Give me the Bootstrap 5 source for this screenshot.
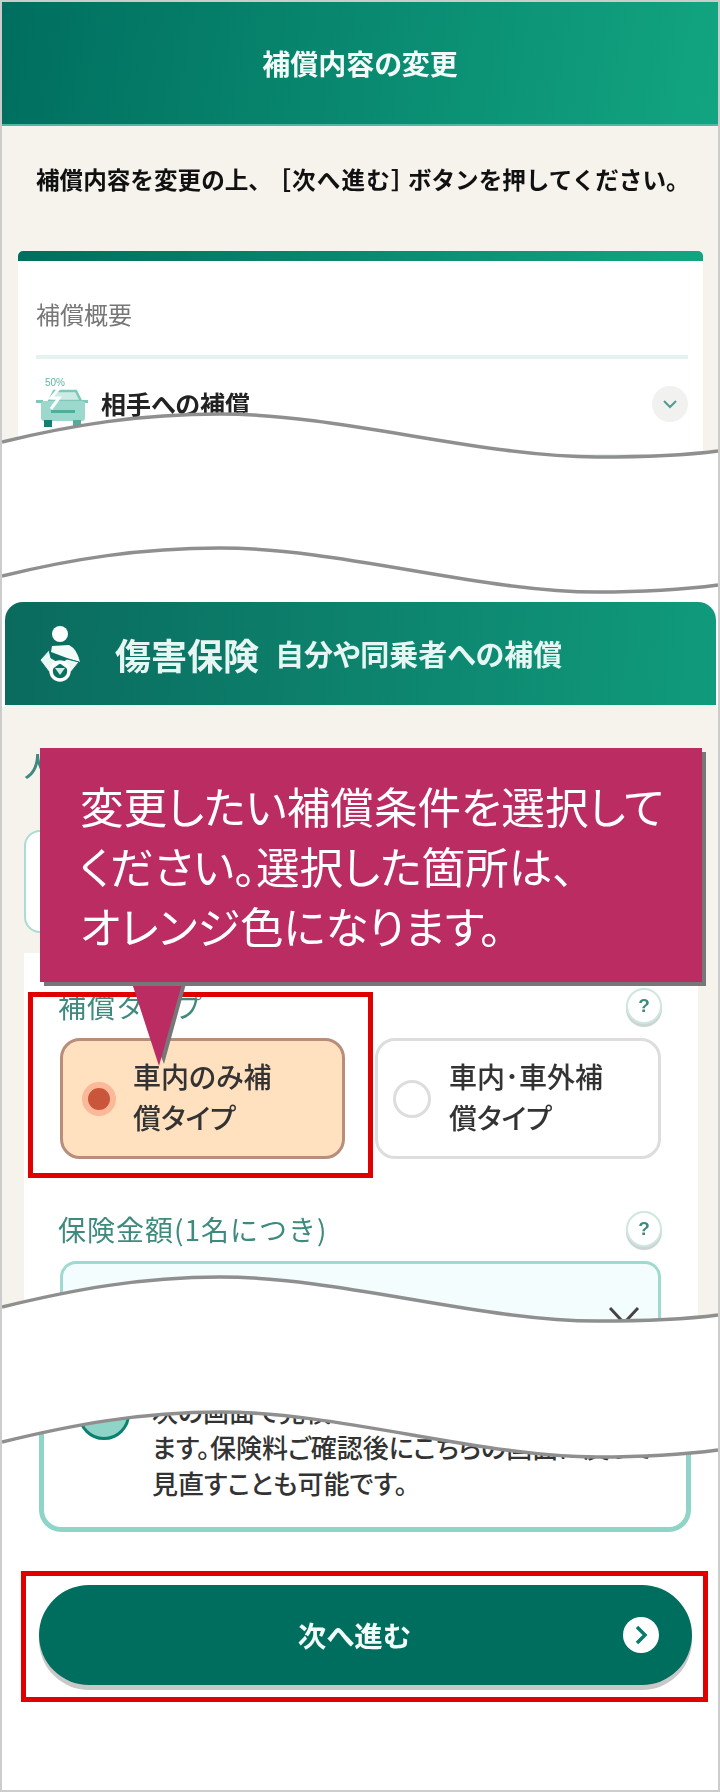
<!DOCTYPE html>
<html lang="ja">
<head>
<meta charset="utf-8">
<title>補償内容の変更</title>
<link href="https://cdn.jsdelivr.net/npm/bootstrap@5.3.0/dist/css/bootstrap.min.css" rel="stylesheet">
<style>
html,body{margin:0;background:#fff;font-family:"Noto Sans CJK JP","Liberation Sans",sans-serif;color:#222}
.frame{position:relative;width:720px;height:1792px;border:2px solid #ccc;overflow:hidden;background:#fff}
.soft{filter:blur(.7px);font-feature-settings:"palt"}
.top-head{height:124px;background:linear-gradient(100deg,#006e5f,#12a581);border-bottom:2px solid #4fb8a0;color:#f2fbf8;font-size:28px;font-weight:700}
.sec-a{height:414px;background:#f6f2ec;padding:38px 15px 0 16px}
.intro{font-size:23.6px;line-height:30px;font-weight:700;margin:0 0 57px 18px;white-space:nowrap;color:#111;font-feature-settings:normal}
.brk{margin:0 -8px 0 7px;letter-spacing:1.2px}
.sum-card{background:#fff;height:319px;padding:0 15px 0 18px}
.sum-bar{height:10px;margin:0 -15px 0 -18px;border-radius:5px 5px 0 0;background:linear-gradient(90deg,#006e5f,#12a581)}
.sum-label{font-size:24px;line-height:34px;color:#777;margin-top:36px}
.sum-line{height:4px;background:#e4f3f1;margin-top:24px}
.sum-row{height:52px;margin-top:19px}
.sum-name{font-size:25px;font-weight:700;margin-left:12px;color:#222}
.chev-dot{width:36px;height:36px;border-radius:50%;background:#f1f1f0}
.sec-b-head{height:105px;margin:62px 2px 0 3px;padding-left:32px;border-radius:18px 18px 0 0;background:linear-gradient(95deg,#0a6a5e,#109b7c);border-bottom:2px solid #e9f7f3;color:#e6f6f2}
.hd-big{font-size:36px;font-weight:700;margin-left:32px;line-height:1}
.hd-sub{font-size:29px;font-weight:700;margin-left:16px;line-height:1}
.sec-b-body{height:677px;background:#f6f2ec;padding:43px 20px 0 22px}
.sec-b-title{font-size:28px;line-height:30px;color:#3f8a7f;font-weight:500}
.plan-box{height:103px;margin-top:50px;background:#fff;border:2px solid #a9dcd2;border-radius:16px}
.opt-panel{background:#fff;height:400px;margin-top:20px;padding:35px 37px 0 36px}
.f-label{font-size:28px;line-height:36px;color:#3f8a7f;margin-left:-2px;letter-spacing:1px;font-feature-settings:normal}
.q-btn{width:36px;height:36px;border-radius:50%;background:#fff;border:2px solid #cfe6e1;box-shadow:0 3px 0 #c9d6d3;color:#3f8a7f;font:700 19px/32px "Liberation Sans",sans-serif;text-align:center;margin-right:-1px}
.opt-grid{display:grid;grid-template-columns:285px 286px;gap:0 30px;margin-top:14px}
.opt-tile{height:121px;border-radius:20px;border:3px solid #ddd;background:#fff;color:#333;padding:0 10px 0 15px;font-weight:500}
.opt-tile.on{background:#ffe0bf;border-color:#b98d7b;padding-left:19px}
.opt-word{font-size:28px;line-height:41px;width:160px;margin:-4px 0 0 18px}
.on .opt-word{margin-left:17px;width:155px}
.r-off{flex:none;width:38px;height:38px;border-radius:50%;border:3px solid #ddd;background:#fff}
.r-on{flex:none;width:34px;height:34px;border-radius:50%;background:#c9563a;border:6px solid #fbb999}
.sel-box{height:110px;margin-top:14px;background:#f4fdfd;border:3px solid #9fd9cf;border-radius:16px;padding-right:18px}
.note-box{height:152px;margin:-4px 27px 0 37px;border:5px solid #8fd5c7;border-radius:22px;background:#fff;padding:8px 10px 0 34px;position:relative}
.note-circle{flex:none;width:52px;height:52px;border-radius:50%;background:#8fd5c7;border:3px solid #0e8070;margin:-5px 0 0 0}
.note-text{font-size:26px;line-height:36px;color:#333;margin-left:22px;white-space:nowrap;font-weight:500}
.go-btn{position:relative;height:100px;margin:53px 26px 0 37px;padding-right:22px;border-radius:50px;background:#006e5f;box-shadow:0 5px 0 #c8c8c8;color:#f2fbf8;font-size:28.5px;font-weight:700}
.go-ico{position:absolute;right:33px;top:32px;width:36px;height:36px}
.mark-box{position:absolute;border:5px solid #e00000}
.mb-a{left:26px;top:990px;width:345px;height:186px}
.mb-b{left:19px;top:1569px;width:687px;height:131px}
.tip{position:absolute;left:38px;top:746px;width:662px;height:234px;background:#bb2c62;box-shadow:4px 4px 0 #777;color:#fff;font-size:43.6px;line-height:60px;padding:27px 0 0 40px;white-space:nowrap;font-feature-settings:"palt"}
.tip-tail{position:absolute;left:126px;top:978px;width:62px;height:86px}
.waves{position:absolute;left:-2px;top:-2px;width:720px;height:1792px;pointer-events:none}
</style>
</head>
<body>
<div class="frame">
  <div class="soft">
    <header class="top-head d-flex align-items-center justify-content-center">補償内容の変更</header>
    <section class="sec-a">
      <p class="intro">補償内容を変更の上、<span class="brk">［次へ進む］</span>ボタンを押してください。</p>
      <div class="sum-card">
        <div class="sum-bar"></div>
        <div class="sum-label">補償概要</div>
        <div class="sum-line"></div>
        <div class="sum-row d-flex align-items-center">
          <svg width="53" height="52" viewBox="7 8 53 52" aria-hidden="true">
            <text x="16" y="16" font-size="10" fill="#5fb5a5" font-family="Liberation Sans">50%</text>
            <path d="M20 31 25 21H47L52 31Z" fill="#cdeae4" stroke="#7cc9ba" stroke-width="2.5"/>
            <path d="M7 30h7v3H7zM52 30h7v3h-7z" fill="#7cc9ba"/>
            <rect x="12" y="31" width="44" height="20" rx="3" fill="#9dd8cc"/>
            <rect x="22" y="40" width="24" height="3" fill="#4fae9c"/>
            <rect x="15" y="50" width="8" height="7" fill="#14806f"/>
            <rect x="44" y="50" width="8" height="7" fill="#4fae9c"/>
            <path d="M32 16 22 28h8l-8 11" fill="none" stroke="#fff" stroke-width="3"/>
          </svg>
          <span class="sum-name flex-grow-1">相手への補償</span>
          <span class="chev-dot d-flex align-items-center justify-content-center">
            <svg width="16" height="12" viewBox="0 0 16 12" aria-hidden="true"><path d="M2 3l6 6 6-6" fill="none" stroke="#4f9d90" stroke-width="2"/></svg>
          </span>
        </div>
        <div class="sum-line"></div>
      </div>
    </section>
    <section class="sec-b-head d-flex align-items-center">
      <svg width="46" height="56" viewBox="8 10 46 56" aria-hidden="true">
        <circle cx="31" cy="18" r="8" fill="#fff"/>
        <path d="M23 30 40 29Q48 33 51 46L38 42 22 36Z" fill="#f2fbf8"/>
        <path d="M20 34 11 44 20 56 31 48 42 56 50 46 38 43 31 47 22 42Z" fill="#eaf8f4" stroke="#0a7566" stroke-width="1"/>
        <circle cx="31" cy="55" r="9" fill="none" stroke="#fff" stroke-width="3.5"/>
        <path d="M26 52h10l-5 7z" fill="#cdeee6"/>
      </svg>
      <span class="hd-big">傷害保険</span>
      <span class="hd-sub">自分や同乗者への補償</span>
    </section>
    <section class="sec-b-body">
      <div class="sec-b-title">人身傷害保険</div>
      <div class="plan-box"></div>
      <div class="opt-panel">
        <div class="d-flex justify-content-between align-items-center">
          <span class="f-label">補償タイプ</span><span class="q-btn">?</span>
        </div>
        <div class="opt-grid">
          <div class="opt-tile on d-flex align-items-center"><span class="r-on"></span><span class="opt-word">車内のみ補償タイプ</span></div>
          <div class="opt-tile d-flex align-items-center"><span class="r-off"></span><span class="opt-word">車内･車外補償タイプ</span></div>
        </div>
        <div class="d-flex justify-content-between align-items-center mt-5 pt-1">
          <span class="f-label">保険金額(1名につき)</span><span class="q-btn">?</span>
        </div>
        <div class="sel-box d-flex align-items-center justify-content-end">
          <svg width="32" height="20" viewBox="0 0 32 20" aria-hidden="true"><path d="M2 2l14 15L30 2" fill="none" stroke="#444" stroke-width="3"/></svg>
        </div>
      </div>
    </section>
    <div class="note-box d-flex align-items-start">
      <span class="note-circle"></span>
      <div class="note-text">次の画面で見積もり結果を確認でき<br>ます。保険料ご確認後にこちらの画面に戻って<br>見直すことも可能です。</div>
    </div>
    <div class="go-btn d-flex align-items-center justify-content-center">
      <span>次へ進む</span>
      <svg class="go-ico" viewBox="0 0 36 36" aria-hidden="true"><circle cx="18" cy="18" r="18" fill="#fff"/><path d="M14 10l8 8-8 8" fill="none" stroke="#0a7a6a" stroke-width="3.5"/></svg>
    </div>
  </div>

  <div class="mark-box mb-a"></div>
  <div class="mark-box mb-b"></div>

  <svg class="tip-tail" viewBox="0 0 62 86" aria-hidden="true">
    <path d="M3 0H59L36 84Z" fill="#777"/>
    <path d="M3 0H55L31 86Z" fill="#bb2c62"/>
  </svg>
  <div class="tip">変更したい補償条件を選択して<br>ください。選択した箇所は、<br>オレンジ色になります。</div>

  <svg class="waves" viewBox="0 0 720 1792" aria-hidden="true">
    <path d="M2 442C72 425 140 414 220 414C340 414 480 457 597 457C640 457 680 456 718 451V585C680 590 640 592 597 592C480 592 340 548 220 548C140 548 72 559 2 576Z" fill="#fff"/>
    <path d="M2 442C72 425 140 414 220 414C340 414 480 457 597 457C640 457 680 456 718 451" fill="none" stroke="#8f8f8f" stroke-width="3.5"/>
    <path d="M2 576C72 559 140 548 220 548C340 548 480 592 597 592C640 592 680 590 718 585" fill="none" stroke="#8f8f8f" stroke-width="3.5"/>
    <path d="M2 1307C72 1290 140 1277 220 1277C340 1277 480 1321 597 1321C640 1321 680 1320 718 1315V1450C680 1455 640 1457 597 1457C480 1457 340 1412 220 1412C140 1412 72 1425 2 1442Z" fill="#fff"/>
    <path d="M2 1307C72 1290 140 1277 220 1277C340 1277 480 1321 597 1321C640 1321 680 1320 718 1315" fill="none" stroke="#8f8f8f" stroke-width="3.5"/>
    <path d="M2 1442C72 1425 140 1412 220 1412C340 1412 480 1457 597 1457C640 1457 680 1455 718 1450" fill="none" stroke="#8f8f8f" stroke-width="3.5"/>
  </svg>
</div>
<script src="https://cdn.jsdelivr.net/npm/bootstrap@5.3.0/dist/js/bootstrap.bundle.min.js"></script>
</body>
</html>
